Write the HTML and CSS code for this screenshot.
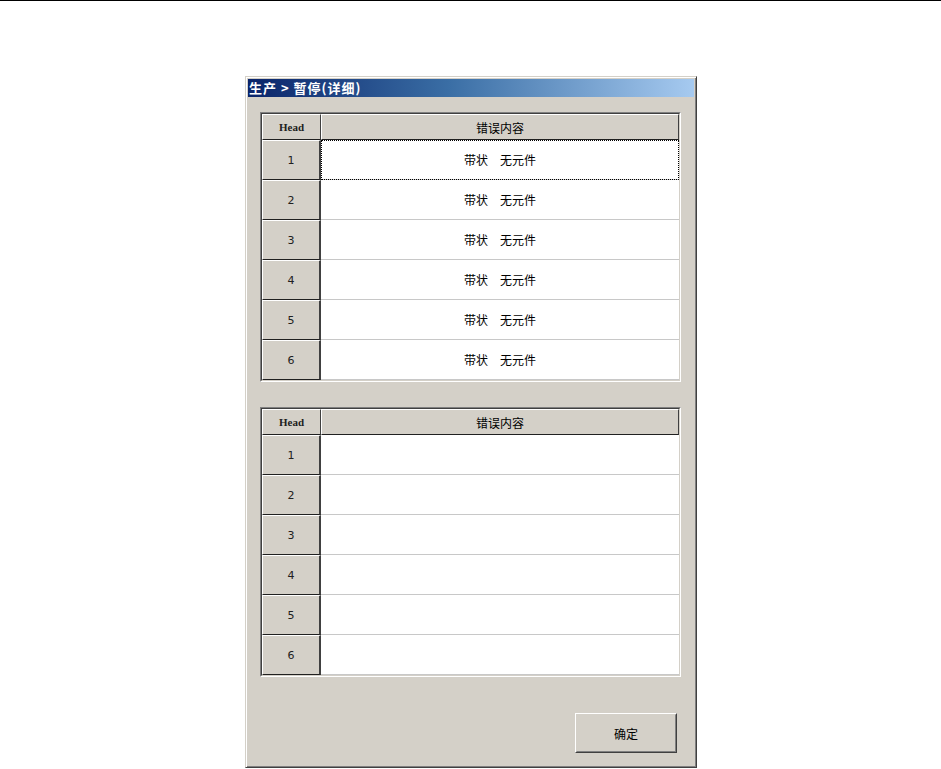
FILE: index.html
```html
<!DOCTYPE html>
<html lang="zh-CN">
<head>
<meta charset="utf-8">
<title>生产 &gt; 暂停(详细)</title>
<link rel="stylesheet" href="styles.css">
</head>
<body>
<div class="topline"></div>
<div class="dialog">
  <div class="titlebar">生产 &gt; 暂停(详细)</div>
  <div class="client">
    <div class="frame">
      <div class="frame-inner grid">
        <div class="hcell mono">Head</div>
        <div class="hcell">错误内容</div>
        <div class="rcell">1</div><div class="ccell focus">带状　无元件</div>
        <div class="rcell">2</div><div class="ccell">带状　无元件</div>
        <div class="rcell">3</div><div class="ccell">带状　无元件</div>
        <div class="rcell">4</div><div class="ccell">带状　无元件</div>
        <div class="rcell">5</div><div class="ccell">带状　无元件</div>
        <div class="rcell">6</div><div class="ccell">带状　无元件</div>
      </div>
    </div>
    <div class="frame second">
      <div class="frame-inner grid">
        <div class="hcell mono">Head</div>
        <div class="hcell">错误内容</div>
        <div class="rcell">1</div><div class="ccell"></div>
        <div class="rcell">2</div><div class="ccell"></div>
        <div class="rcell">3</div><div class="ccell"></div>
        <div class="rcell">4</div><div class="ccell"></div>
        <div class="rcell">5</div><div class="ccell"></div>
        <div class="rcell">6</div><div class="ccell"></div>
      </div>
    </div>
    <div class="actions">
      <button class="btn" type="button"><span>确定</span></button>
    </div>
  </div>
</div>
</body>
</html>
```
FILE: styles.css
```css
html, body {
  margin: 0;
  padding: 0;
  background: #ffffff;
}
body {
  font-family: "Noto Sans CJK SC", "Liberation Sans", sans-serif;
  font-size: 12px;
  color: #000;
}
.topline {
  height: 1px;
  background: #000;
}
.dialog {
  box-sizing: border-box;
  width: 452px;
  height: 692px;
  margin: 75px 0 0 245px;
  background: #d4d0c8;
  border: 1px solid;
  border-color: #d4d0c8 #404040 #404040 #d4d0c8;
  box-shadow: inset 1px 1px 0 #ffffff, inset -1px -1px 0 #808080;
  padding: 2px;
  display: flex;
  flex-direction: column;
}
.titlebar {
  flex: none;
  height: 18px;
  line-height: 18px;
  padding-left: 1px;
  color: #ffffff;
  font-weight: bold;
  font-size: 13px;
  letter-spacing: 1px;
  background: linear-gradient(to right, #0a246a 0%, #3a6ea5 45%, #a6caf0 100%);
  white-space: nowrap;
}
.client {
  flex: 1;
  display: flex;
  flex-direction: column;
  padding: 15px 13px 12px 12px;
}
.frame {
  box-sizing: border-box;
  width: 421px;
  height: 270px;
  border: 1px solid;
  border-color: #808080 #ffffff #ffffff #808080;
}
.frame.second {
  margin-top: 25px;
}
.frame-inner {
  box-sizing: border-box;
  height: 100%;
  border: 1px solid;
  border-color: #404040 #d4d0c8 #d4d0c8 #404040;
  background: #ffffff;
}
.grid {
  display: grid;
  grid-template-columns: 59px 1fr;
  grid-template-rows: 26px repeat(6, 40px);
}
.hcell, .rcell {
  box-sizing: border-box;
  background: #d4d0c8;
  border-top: 1px solid #ffffff;
  border-left: 1px solid #ffffff;
  border-right: 1px solid #404040;
  border-bottom: 1px solid #202020;
  display: flex;
  align-items: center;
  justify-content: center;
}
.hcell.mono {
  font-family: "Liberation Serif", "Times New Roman", serif;
  font-size: 11px;
  font-weight: bold;
  color: #202020;
}
.rcell {
  font-family: "DejaVu Sans", "Liberation Sans", sans-serif;
  font-size: 11px;
  color: #202020;
  border-right: 2px solid #404040;
}
.ccell {
  box-sizing: border-box;
  background: #ffffff;
  border-bottom: 1px solid #c8c8c8;
  display: flex;
  align-items: center;
  justify-content: center;
}
.ccell.focus {
  outline: 1px dotted #000;
  outline-offset: -1px;
}
.actions {
  margin-top: 36px;
  display: flex;
  justify-content: flex-end;
  padding-right: 4px;
}
.btn {
  box-sizing: border-box;
  width: 102px;
  height: 40px;
  padding: 0;
  margin: 0;
  background: #d4d0c8;
  border: 1px solid;
  border-color: #ffffff #404040 #404040 #ffffff;
  font-family: "Noto Sans CJK SC", "Liberation Sans", sans-serif;
  font-size: 12px;
  color: #000;
}
.btn span {
  display: flex;
  height: 100%;
  align-items: center;
  justify-content: center;
  box-sizing: border-box;
  border: 1px solid;
  border-color: #d4d0c8 #808080 #808080 #d4d0c8;
}
```
